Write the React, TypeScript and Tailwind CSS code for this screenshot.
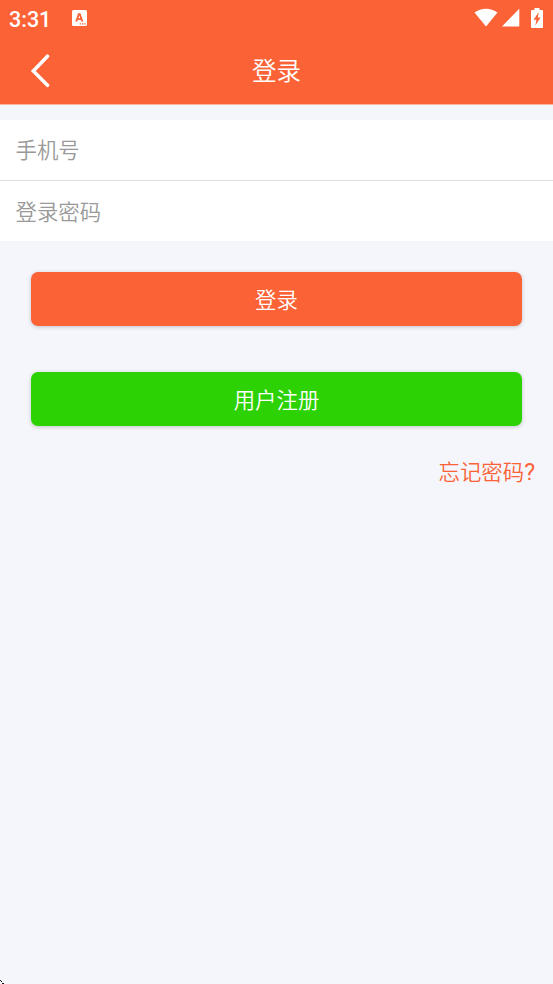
import { useState } from "react";
import type { FormEvent } from "react";

const StatusBar = () => {
  return (
    <div className="flex h-[37px] items-center justify-between pl-[9px] pr-[10px] text-white">
      <div className="flex items-center gap-[21px]">
        <span className="font-[Roboto] text-[21.5px] font-medium leading-[37px] pt-px">
          3:31
        </span>
        <svg className="-mt-px" width="15" height="16" viewBox="0 0 15 16">
          <rect width="15" height="16" rx="1.5" fill="#fff" />
          <path
            d="M3.3 11.5 6.1 3.3H8.5L11.3 11.5H9.3L8.8 9.9H5.8L5.3 11.5ZM6.4 8.2H8.2L7.3 5.3Z"
            fill="#fb6337"
          />
          <path
            d="M7.7 13.2h1.4v1.4H7.7zM10 13.2h1.4v1.4H10zM12.3 13.2h1.4v1.4h-1.4z"
            fill="#fb6337"
          />
        </svg>
      </div>
      <div className="-mt-0.5 flex items-center">
        <svg width="24" height="19" viewBox="0 0 24 19" fill="#fff">
          <path d="M0.5 4.6C7 -0.7 17 -0.7 23.5 4.6L12 18.6Z" />
        </svg>
        <svg className="ml-1" width="18" height="19" viewBox="0 0 18 19" fill="#fff">
          <path d="M17.3 0.8V18.5H0Z" />
        </svg>
        <svg className="ml-[11px]" width="12" height="20" viewBox="0 0 12 20">
          <path
            d="M3.5 0h5v2H11q1 0 1 1v16q0 1-1 1H1q-1 0-1-1V3q0-1 1-1h2.5Z"
            fill="#fff"
          />
          <path d="M7.8 4 2.6 11.8h2.8L4.4 17.5 9.6 9.6H6.8Z" fill="#fb6337" />
        </svg>
      </div>
    </div>
  );
};

const Header = () => {
  return (
    <header className="h-[105px] border-b border-[#fdb5a0] bg-[#fb6337]">
      <StatusBar />
      <div className="grid h-[67px] grid-cols-[80px_1fr_80px] items-center text-white">
        <button type="button" aria-label="返回" className="pl-[30px]">
          <svg width="20" height="34" viewBox="0 0 20 34">
            <path
              d="M17.5 2.2 3.3 17 17.5 31.3"
              fill="none"
              stroke="#fff"
              strokeWidth="3.5"
              strokeLinecap="round"
            />
          </svg>
        </button>
        <h1 className="pb-0.5 text-center text-[24.5px] font-[350] leading-[36px]">
          登录
        </h1>
      </div>
    </header>
  );
};

export default function App() {
  const [phone, setPhone] = useState("");
  const [password, setPassword] = useState("");

  const handleSubmit = (e: FormEvent) => {
    e.preventDefault();
  };

  return (
    <main className="flex min-h-screen flex-col bg-[#f5f6fc] font-['Noto_Sans_CJK_SC',sans-serif] font-[350]">
      <Header />
      <form className="mt-[15px] flex flex-col" onSubmit={handleSubmit}>
        <div className="flex flex-col bg-white">
          <input
            type="tel"
            placeholder="手机号"
            value={phone}
            onChange={(e) => setPhone(e.target.value)}
            className="h-[61px] border-b border-[#dddddd] px-[15.5px] pb-[3px] text-[21.4px] outline-none placeholder:text-[#999999]"
          />
          <input
            type="password"
            placeholder="登录密码"
            value={password}
            onChange={(e) => setPassword(e.target.value)}
            className="h-[60px] px-[15.5px] pb-0.5 text-[21.4px] outline-none placeholder:text-[#999999]"
          />
        </div>
        <div className="mt-[31px] flex flex-col gap-[46px] px-[31px] text-[21.4px] text-white">
          <button
            type="submit"
            className="h-[54px] rounded-[7px] bg-[#fb6337] shadow-[0_1px_4px_rgba(0,0,0,0.2)]"
          >
            登录
          </button>
          <button
            type="button"
            className="h-[54px] rounded-[7px] bg-[#2cd203] shadow-[0_1px_4px_rgba(0,0,0,0.2)]"
          >
            用户注册
          </button>
        </div>
        <a
          href="#"
          className="mt-[29px] mr-[18px] self-end text-[21.4px] leading-8 text-[#fb6337]"
        >
          忘记密码<span className="font-[Roboto] text-[23px] font-normal">?</span>
        </a>
      </form>
      <svg className="mt-auto" width="4" height="4" viewBox="0 0 4 4">
        <path d="M0 0h1v1H0zM1 1h1v1H1zM2 3h2v1H2z" fill="#111" />
      </svg>
    </main>
  );
}
